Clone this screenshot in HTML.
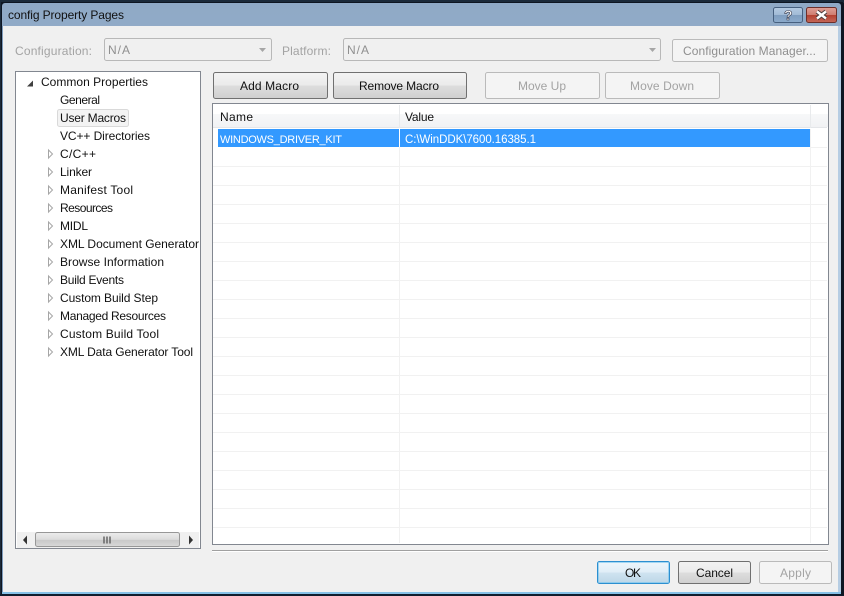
<!DOCTYPE html>
<html>
<head>
<meta charset="utf-8">
<title>config Property Pages</title>
<style>
html,body{margin:0;padding:0;background:#f0f0f0;width:844px;height:596px;overflow:hidden}
svg{display:block}
text{font-family:"Liberation Sans",sans-serif;font-size:12px;fill:#111}
.d{fill:#a3a3a3}
.g{fill:#8f8f8f}
.w{fill:#fff}
.c{font-size:11px}
</style>
</head>
<body>
<svg width="844" height="596" viewBox="0 0 844 596" xmlns="http://www.w3.org/2000/svg">
<defs>
<linearGradient id="tb" x1="0" y1="0" x2="0" y2="1"><stop offset="0" stop-color="#8fa9c6"/><stop offset="1" stop-color="#bcd0e6"/></linearGradient>
<linearGradient id="btn" x1="0" y1="0" x2="0" y2="1"><stop offset="0" stop-color="#f3f3f3"/><stop offset=".48" stop-color="#ebebeb"/><stop offset=".52" stop-color="#dddddd"/><stop offset="1" stop-color="#cfcfcf"/></linearGradient>
<linearGradient id="ok" x1="0" y1="0" x2="0" y2="1"><stop offset="0" stop-color="#eef6fb"/><stop offset=".48" stop-color="#e0eef7"/><stop offset=".52" stop-color="#cfe3f0"/><stop offset="1" stop-color="#bcd6e7"/></linearGradient>
<linearGradient id="hd" x1="0" y1="0" x2="0" y2="1"><stop offset="0" stop-color="#ffffff"/><stop offset=".4" stop-color="#ffffff"/><stop offset=".41" stop-color="#f7f8f9"/><stop offset="1" stop-color="#f1f2f4"/></linearGradient>
<linearGradient id="hb" x1="0" y1="0" x2="0" y2="1"><stop offset="0" stop-color="#b5cbe2"/><stop offset=".5" stop-color="#a1bad6"/><stop offset=".51" stop-color="#7f9dbf"/><stop offset="1" stop-color="#8cabcc"/></linearGradient>
<linearGradient id="cb" x1="0" y1="0" x2="0" y2="1"><stop offset="0" stop-color="#dfa096"/><stop offset=".5" stop-color="#cf7d70"/><stop offset=".51" stop-color="#b4402f"/><stop offset="1" stop-color="#c4685a"/></linearGradient>
<linearGradient id="sb" x1="0" y1="0" x2="0" y2="1"><stop offset="0" stop-color="#ececec"/><stop offset=".5" stop-color="#dcdcdc"/><stop offset=".55" stop-color="#c9c9c9"/><stop offset="1" stop-color="#d8d8d8"/></linearGradient>
</defs>

<!-- window frame -->
<rect width="844" height="596" fill="#1b2a3a"/>
<rect x="1" y="2" width="842" height="593" fill="#0e1622"/>
<rect x="2" y="3" width="839" height="591" rx="3" fill="url(#tb)"/>
<rect x="2" y="26" width="839" height="568" fill="#8fb9dc"/>
<rect x="3" y="26" width="835" height="566" fill="#f0f0f0"/>
<rect x="2" y="592" width="839" height="2" fill="#86c0e6"/>
<rect x="0" y="594" width="844" height="2" fill="#101c2c"/>
<rect x="2" y="26" width="1" height="566" fill="#7e9cbd"/>
<rect x="838" y="26" width="3" height="566" fill="#b6cde3"/>
<rect x="841" y="3" width="3" height="592" fill="#0e1622"/>
<text x="8" y="19" textLength="116">config Property Pages</text>

<!-- caption buttons -->
<rect x="773.5" y="7.5" width="29" height="15" rx="2" fill="url(#hb)" stroke="#47607f"/>
<text x="784" y="20" style="font-size:14px;font-weight:bold;fill:#fff;stroke:#334;stroke-width:.6">?</text>
<rect x="806.5" y="7.5" width="30" height="15" rx="2" fill="url(#cb)" stroke="#6d2f2a"/>
<path d="M817 11.5l9 7M826 11.5l-9 7" stroke="#4a3b3b" stroke-width="4.4" fill="none"/>
<path d="M817 11.5l9 7M826 11.5l-9 7" stroke="#fff" stroke-width="2.4" fill="none"/>

<!-- config row -->
<text class="d" x="15" y="55" textLength="77">Configuration:</text>
<rect x="104.5" y="38.5" width="167" height="22" rx="2" fill="#f0f0f0" stroke="#b8b8b8"/>
<text class="g" x="108" y="54" textLength="22">N/A</text>
<path d="M259 48h7l-3.5 4z" fill="#a6a6a6"/>
<text class="d" x="282" y="55" textLength="49">Platform:</text>
<rect x="343.5" y="38.5" width="317" height="22" rx="2" fill="#f0f0f0" stroke="#b8b8b8"/>
<text class="g" x="347" y="54" textLength="22">N/A</text>
<path d="M649 48h7l-3.5 4z" fill="#a6a6a6"/>
<rect x="672.5" y="39.5" width="155" height="22" rx="2" fill="#f4f4f4" stroke="#bababa"/>
<text class="g" x="683" y="55" textLength="133">Configuration Manager...</text>

<!-- tree -->
<rect x="15.5" y="71.5" width="185" height="477" fill="#fff" stroke="#828790"/>
<path d="M27 86.5l6-6v6z" fill="#404040"/>
<text x="41" y="86" textLength="107">Common Properties</text>
<text x="60" y="104" textLength="40">General</text>
<rect x="57.5" y="109.5" width="71" height="17" rx="2" fill="#f3f3f3" stroke="#d9d9d9"/>
<text x="60" y="122" textLength="66">User Macros</text>
<text x="60" y="140" textLength="90">VC++ Directories</text>
<g fill="#fff" stroke="#a6a6a6">
<path d="M48.5 150l4 4l-4 4z"/>
<path d="M48.5 168l4 4l-4 4z"/>
<path d="M48.5 186l4 4l-4 4z"/>
<path d="M48.5 204l4 4l-4 4z"/>
<path d="M48.5 222l4 4l-4 4z"/>
<path d="M48.5 240l4 4l-4 4z"/>
<path d="M48.5 258l4 4l-4 4z"/>
<path d="M48.5 276l4 4l-4 4z"/>
<path d="M48.5 294l4 4l-4 4z"/>
<path d="M48.5 312l4 4l-4 4z"/>
<path d="M48.5 330l4 4l-4 4z"/>
<path d="M48.5 348l4 4l-4 4z"/>
</g>
<text x="60" y="158" textLength="36">C/C++</text>
<text x="60" y="176" textLength="32">Linker</text>
<text x="60" y="194" textLength="73">Manifest Tool</text>
<text x="60" y="212" textLength="53">Resources</text>
<text x="60" y="230" textLength="28">MIDL</text>
<text x="60" y="248" textLength="139">XML Document Generator</text>
<text x="60" y="266" textLength="104">Browse Information</text>
<text x="60" y="284" textLength="64">Build Events</text>
<text x="60" y="302" textLength="98">Custom Build Step</text>
<text x="60" y="320" textLength="106">Managed Resources</text>
<text x="60" y="338" textLength="99">Custom Build Tool</text>
<text x="60" y="356" textLength="133">XML Data Generator Tool</text>

<!-- tree scrollbar -->
<rect x="17" y="532" width="182" height="16" fill="#f0f0f0"/>
<rect x="35.5" y="532.5" width="144" height="14" rx="2" fill="url(#sb)" stroke="#979797"/>
<path d="M104 536.5v7M107 536.5v7M110 536.5v7" stroke="#666" stroke-width="1.5"/>
<path d="M23 540l4-4.5v9z" fill="#333"/>
<path d="M193 540l-4-4.5v9z" fill="#333"/>

<!-- macro buttons -->
<rect x="213.5" y="72.5" width="114" height="26" rx="2" fill="url(#btn)" stroke="#707070"/>
<text x="240" y="90" textLength="59">Add Macro</text>
<rect x="333.5" y="72.5" width="133" height="26" rx="2" fill="url(#btn)" stroke="#707070"/>
<text x="359" y="90" textLength="80">Remove Macro</text>
<rect x="485.5" y="72.5" width="114" height="26" rx="2" fill="#f4f4f4" stroke="#bababa"/>
<text class="d" x="518" y="90" textLength="48">Move Up</text>
<rect x="605.5" y="72.5" width="114" height="26" rx="2" fill="#f4f4f4" stroke="#bababa"/>
<text class="d" x="630" y="90" textLength="64">Move Down</text>

<!-- grid -->
<rect x="212.5" y="103.5" width="616" height="441" fill="#fff" stroke="#828790"/>
<rect x="213" y="105" width="615" height="22" fill="url(#hd)"/>
<path d="M213 127.5h614" stroke="#e4e6e9"/>
<path d="M399.5 105v23M810.5 105v23" stroke="#e8eaec"/>
<text x="220" y="121" textLength="33">Name</text>
<text x="405" y="121" textLength="29">Value</text>
<path d="M399.5 129V543M810.5 129V543" stroke="#f1f1f1"/>
<path d="M213 166.5h614M213 185.5h614M213 204.5h614M213 223.5h614M213 242.5h614M213 261.5h614M213 280.5h614M213 299.5h614M213 318.5h614M213 337.5h614M213 356.5h614M213 375.5h614M213 394.5h614M213 413.5h614M213 432.5h614M213 451.5h614M213 470.5h614M213 489.5h614M213 508.5h614M213 527.5h614M810 147.5h17" stroke="#f1f1f1"/>
<rect x="218" y="129" width="592" height="18" fill="#3399ff"/>
<rect x="399" y="129" width="1" height="18" fill="#fff"/>
<text class="w c" x="220" y="143" textLength="122">WINDOWS_DRIVER_KIT</text>
<text class="w" x="405" y="143" textLength="131" style="font-size:11.5px">C:\WinDDK\7600.16385.1</text>

<!-- separator -->
<rect x="212" y="550" width="616" height="1" fill="#a0a0a0"/>
<rect x="212" y="551" width="616" height="1" fill="#fff"/>

<!-- dialog buttons -->
<rect x="597.5" y="561.5" width="72" height="22" rx="2" fill="url(#ok)" stroke="#2c8fd0"/>
<rect x="598.5" y="562.5" width="70" height="20" rx="1" fill="none" stroke="#6fc3ee" stroke-opacity=".6"/>
<text x="625" y="577" textLength="16">OK</text>
<rect x="678.5" y="561.5" width="72" height="22" rx="2" fill="url(#btn)" stroke="#707070"/>
<text x="696" y="577" textLength="37">Cancel</text>
<rect x="759.5" y="561.5" width="72" height="22" rx="2" fill="#f4f4f4" stroke="#bababa"/>
<text class="d" x="780" y="577" textLength="31">Apply</text>
</svg>
</body>
</html>
